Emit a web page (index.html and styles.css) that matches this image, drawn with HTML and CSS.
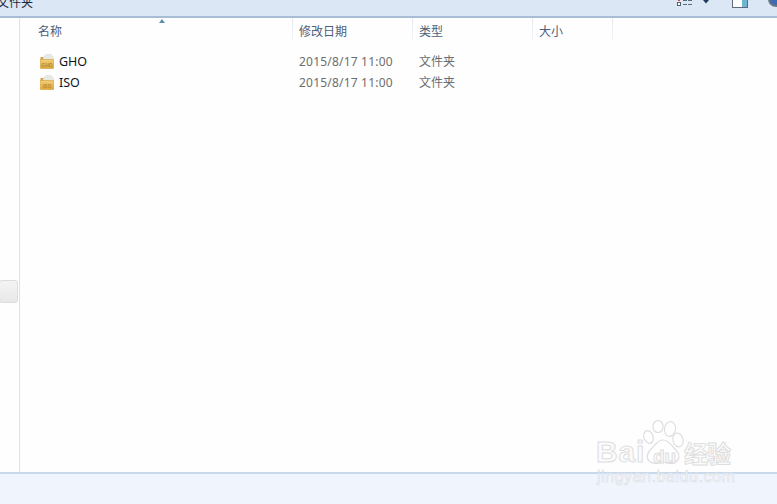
FILE: index.html
```html
<!DOCTYPE html>
<html lang="zh">
<head>
<meta charset="utf-8">
<title>文件夹</title>
<link rel="stylesheet" href="styles.css">
</head>
<body>
<div class="window">
  <header class="toolbar">
    <span class="crumb">文件夹</span>
    <div class="tools">
      <svg class="ic-view" width="32" height="8" viewBox="0 0 32 8">
        <rect x="0.500" y="-3.500" width="3" height="3" fill="#fff" stroke="#56606e"/>
        <rect x="0.500" y="2.500" width="3" height="3" fill="#fff" stroke="#56606e"/>
        <rect x="1" y="-1" width="2" height="2" fill="#d8453c"/>
        <path d="M6 0.500h9M6 4.500h9" stroke="#5a6a80" stroke-dasharray="4 1"/>
        <path d="M26 0h6l-3 3.500z" fill="#1f3a5f"/>
      </svg>
      <svg class="ic-pane" width="16" height="9" viewBox="0 0 16 9">
        <rect x="0.500" y="-3" width="15" height="10.500" fill="#fff" stroke="#5f6b7a"/>
        <rect x="10" y="-2" width="5" height="9" fill="#6fb4d0"/>
      </svg>
      <span class="ic-help"></span>
    </div>
  </header>

  <div class="body">
    <aside class="nav"><div class="thumb"></div></aside>
    <main class="list">
      <span class="sort"></span>
      <div class="heads">
        <div class="head c-name">名称</div>
        <div class="head c-date">修改日期</div>
        <div class="head c-type">类型</div>
        <div class="head c-size">大小</div>
      </div>
      <div class="rows">
        <div class="row">
          <div class="c-name name">
            <svg class="folder" width="14" height="15" viewBox="0 0 14 15"><use href="#fld"/><text class="tag" x="7" y="12.500">GHO</text></svg>
            <span>GHO</span>
          </div>
          <div class="c-date cell">2015/8/17 11:00</div>
          <div class="c-type cell">文件夹</div>
        </div>
        <div class="row">
          <div class="c-name name">
            <svg class="folder" width="14" height="15" viewBox="0 0 14 15"><use href="#fld"/><text class="tag" x="7" y="12.500">ISO</text></svg>
            <span>ISO</span>
          </div>
          <div class="c-date cell">2015/8/17 11:00</div>
          <div class="c-type cell">文件夹</div>
        </div>
      </div>
    </main>
  </div>
  <footer class="status"></footer>

  <div class="mark">
    <svg class="paw" width="41" height="46" viewBox="0 0 41 46" fill="#fff" fill-opacity=".6" stroke="#dedede" stroke-width="1.200">
      <ellipse cx="5.500" cy="17" rx="4.500" ry="6.500" transform="rotate(-20 5.500 17)"/>
      <ellipse cx="15" cy="6.500" rx="5" ry="6"/>
      <ellipse cx="27" cy="9" rx="5.500" ry="7.500" transform="rotate(8 27 9)"/>
      <ellipse cx="35" cy="20" rx="5" ry="7" transform="rotate(-15 35 20)"/>
      <path d="M20 20c6 0 8 5 12 9 5 5 5 9 2 12-3 3-8 3-14 1-5 2-11 2-14-1-3-3-2-8 2-12 4-3 6-9 12-9z"/>
    </svg>
    <span class="mark-bai">Bai</span>
    <span class="mark-du">du</span>
    <span class="mark-jy">经验</span>
    <div class="mark-url">jingyan.baidu.com</div>
  </div>
</div>

<svg width="0" height="0" class="defs">
  <defs>
    <linearGradient id="fg" x1="0" y1="0" x2="0" y2="1">
      <stop offset="0" stop-color="#f3cf78"/>
      <stop offset="1" stop-color="#dda63a"/>
    </linearGradient>
    <g id="fld">
      <path d="M0.500 3h3l1 1.500v2h-4z" fill="#cfa24a"/>
      <path d="M3 6c0-3.500 2.500-6 5.500-6s5 2.500 5 5v2H3z" fill="#e8e8e4" stroke="#d2d4d2" stroke-width=".5"/>
      <rect x="0.300" y="5.500" width="13.400" height="9" rx="0.500" fill="url(#fg)" stroke="#cf9f38" stroke-width=".6"/>
    </g>
  </defs>
</svg>
</body>
</html>
```

FILE: styles.css
```css
* { box-sizing: border-box; }

html, body {
  margin: 0;
  height: 100%;
  overflow: hidden;
}

body {
  font-family: "Noto Sans CJK SC", "Noto Sans", sans-serif;
  font-size: 12px;
  background: #fefefe;
}

.defs { position: absolute; }

.window {
  position: relative;
  width: 777px;
  height: 504px;
  display: flex;
  flex-direction: column;
  overflow: hidden;
}

.toolbar {
  flex: none;
  height: 18px;
  display: flex;
  align-items: flex-start;
  justify-content: space-between;
  background: #dce7f5;
  border-bottom: 2px solid #a8bcd4;
  overflow: hidden;
}

.crumb {
  margin: -7px 0 0 -3px;
  font-size: 12px;
  line-height: 18px;
  color: #1e2a3a;
}

.tools {
  display: flex;
  align-items: flex-start;
}

.ic-view { display: block; }
.ic-pane { margin-left: 23px; display: block; }

.ic-help {
  width: 16px;
  height: 16px;
  margin: -9px -7px 0 20px;
  border-radius: 50%;
  background: #3b6cb0;
  border: 2px solid #6a7686;
}

.body {
  flex: 1;
  display: flex;
  min-height: 0;
}

.nav {
  flex: none;
  width: 20px;
  padding-top: 262px;
  border-right: 1px solid #d6e4f2;
}

.thumb {
  width: 19px;
  height: 23px;
  margin-left: -1px;
  border: 1px solid #dcdcdc;
  border-radius: 3px;
  background: linear-gradient(#f4f4f4, #e8e8e8);
}

.list {
  position: relative;
  flex: 1;
  min-width: 0;
}

.sort {
  position: absolute;
  top: 1px;
  left: 139px;
  width: 0;
  height: 0;
  border-left: 3.500px solid transparent;
  border-right: 3.500px solid transparent;
  border-bottom: 4px solid #5b8fae;
}

.heads {
  display: flex;
  height: 25px;
}

.head {
  height: 25px;
  line-height: 26px;
  color: #4c607a;
  border-right: 1px solid transparent;
  border-image: linear-gradient(#dfe7f0, #f4f7fb 85%, #fefefe) 1;
}

.c-name { width: 273px; padding-left: 18px; }
.c-date { width: 120px; padding-left: 6px; }
.c-type { width: 120px; padding-left: 6px; }
.c-size { width: 80px; padding-left: 6px; }

.rows {
  padding-top: 8px;
}

.row {
  display: flex;
  height: 21px;
  line-height: 21px;
}

.name {
  display: flex;
  align-items: center;
  gap: 5px;
  padding-left: 20px;
  color: #10161f;
  font-family: "Noto Sans", sans-serif;
  font-size: 12.500px;
}

.folder { display: block; margin-top: -1px; }

.tag {
  font-family: "Liberation Sans", sans-serif;
  font-size: 5px;
  font-weight: 700;
  text-anchor: middle;
  fill: #b98a2c;
}

.cell {
  color: #6d6d6d;
}

.c-type.cell { line-height: 19px; }

.c-date.cell {
  font-family: "Noto Sans", sans-serif;
  font-size: 12px;
  letter-spacing: .2px;
}

.status {
  flex: none;
  height: 32px;
  background: #f0f4fc;
  border-top: 2px solid #c8d9ec;
}

.mark {
  position: absolute;
  left: 596px;
  top: 419px;
  width: 142px;
  height: 70px;
  font-family: "Liberation Sans", sans-serif;
  font-weight: 700;
  color: #fbfbfb;
  -webkit-text-stroke: 1px #dedede;
}

.paw {
  position: absolute;
  left: 47px;
  top: 1px;
}

.mark-bai {
  position: absolute;
  left: 0;
  top: 16px;
  font-size: 30px;
  line-height: 34px;
  letter-spacing: .8px;
}

.mark-du {
  position: absolute;
  left: 57px;
  top: 27px;
  font-size: 19px;
  line-height: 22px;
}

.mark-jy {
  position: absolute;
  left: 88px;
  top: 20px;
  font-family: "Noto Sans CJK SC", sans-serif;
  font-size: 24px;
  line-height: 28px;
  letter-spacing: -1px;
  white-space: nowrap;
}

.mark-url {
  position: absolute;
  left: 1px;
  top: 49px;
  font-size: 16px;
  font-weight: 400;
  line-height: 18px;
  letter-spacing: .55px;
  color: #f6f8fc;
  -webkit-text-stroke: .6px #dcdfe6;
  white-space: nowrap;
}
```
